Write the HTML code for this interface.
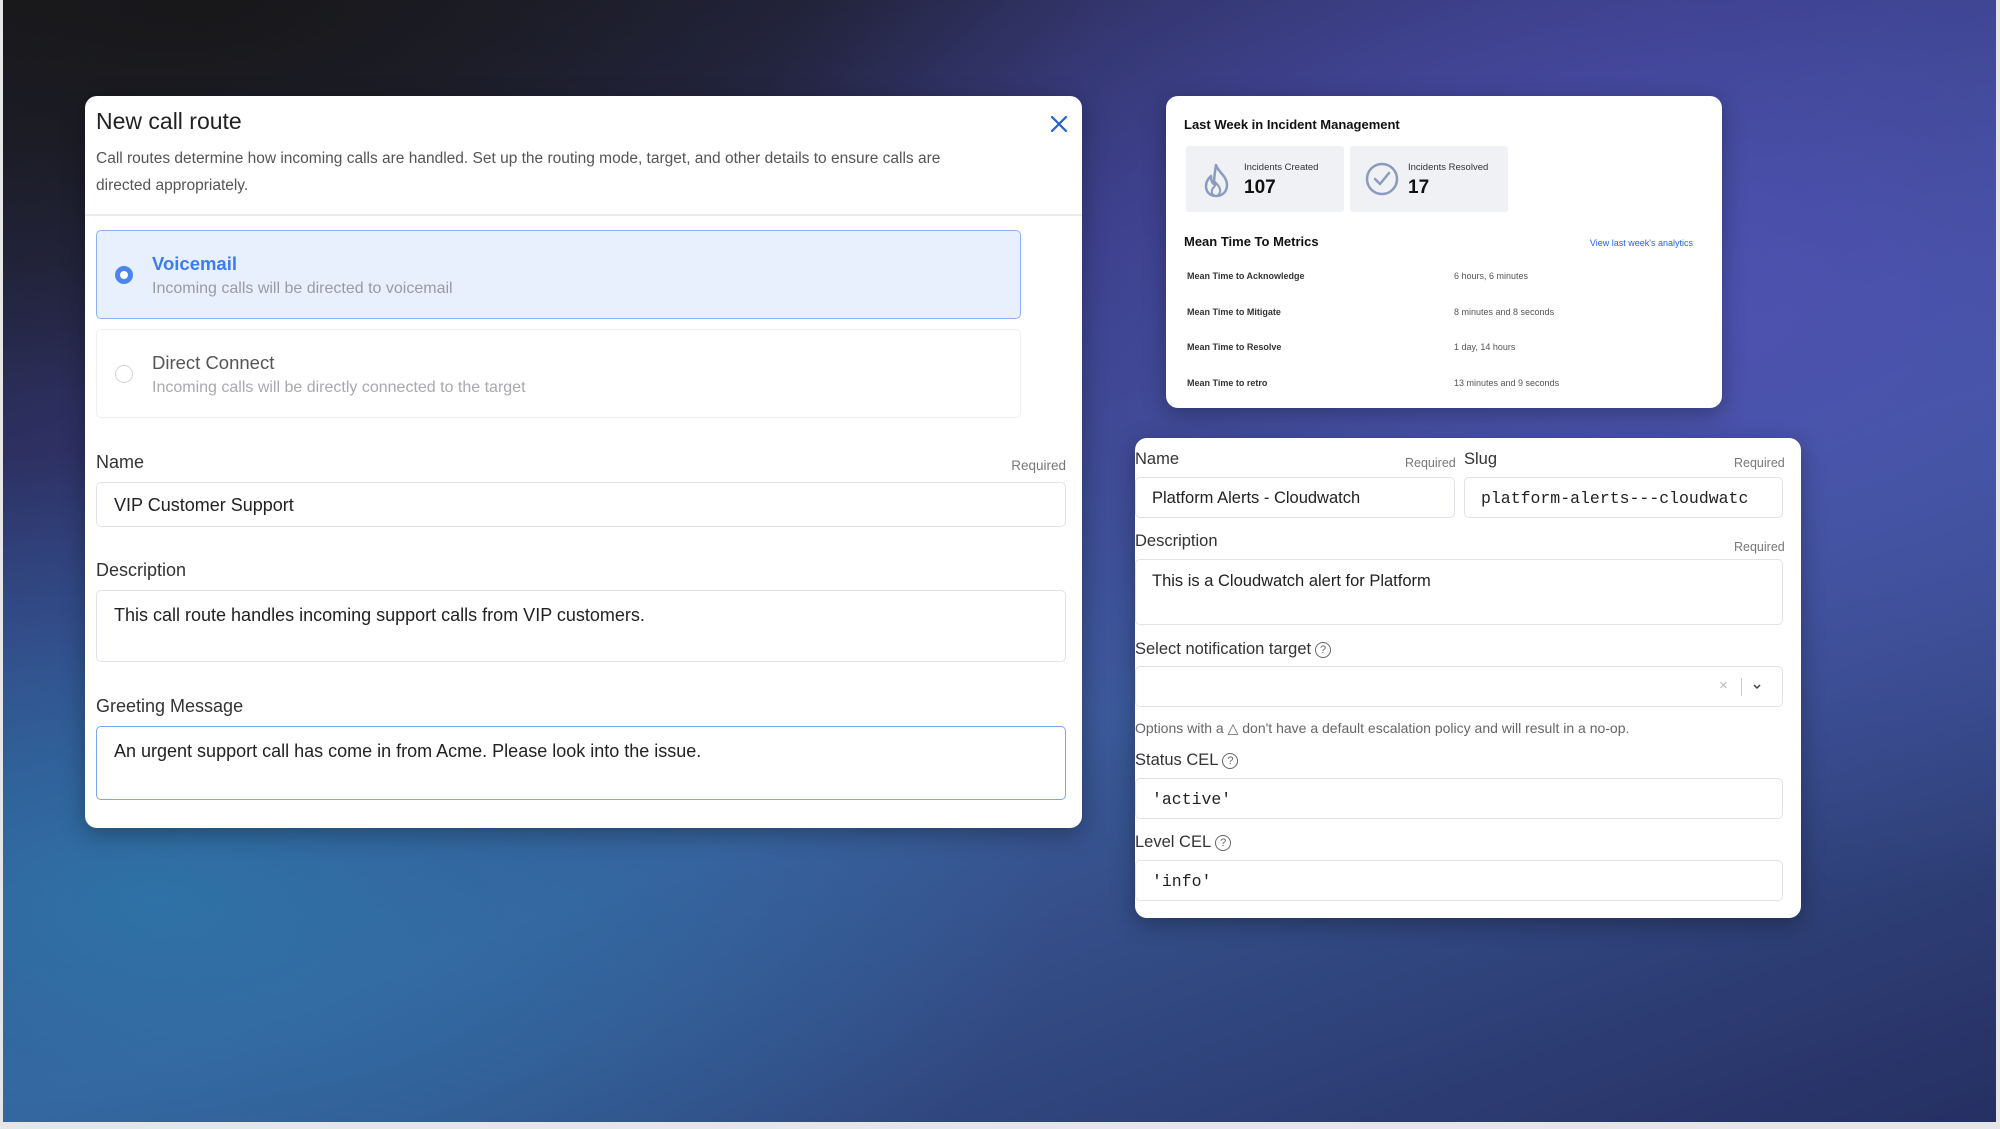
<!DOCTYPE html>
<html><head><meta charset="utf-8"><style>
*{box-sizing:border-box;margin:0;padding:0}
body{width:2000px;height:1129px;position:relative;overflow:hidden;background:#e6e6e6;font-family:"Liberation Sans",sans-serif}
#bg{position:absolute;left:3px;top:0;width:1993px;height:1122px;
background:
radial-gradient(ellipse 900px 450px at 150px 900px, rgba(45,120,170,0.85), rgba(45,120,170,0) 100%),
radial-gradient(ellipse 1000px 600px at 1700px 300px, rgba(80,82,180,0.9), rgba(80,82,180,0) 100%),
radial-gradient(ellipse 900px 400px at 200px 0px, rgba(24,24,26,1), rgba(24,24,26,0) 100%),
linear-gradient(160deg,#1c1c24 0%,#34387a 35%,#3a5a98 60%,#262f62 100%);}
.card{position:absolute;background:#fff;border-radius:12px;box-shadow:0 6px 24px rgba(0,0,0,0.3)}
.abs{position:absolute;white-space:nowrap}
.inp{position:absolute;border:1.5px solid #e2e3e8;border-radius:5px;background:#fff}
.lbl{font-size:18px;color:#333}
.req{font-size:13.5px;color:#777}
.mono{font-family:"Liberation Mono",monospace}
.q{display:inline-block;width:16px;height:16px;border:1.3px solid #666;border-radius:50%;font-size:11px;text-align:center;line-height:14px;color:#666;vertical-align:1px;margin-left:4px}
</style></head><body>
<div id="bg"></div>

<!-- left card -->
<div class="card" style="left:85px;top:96px;width:997px;height:732px">
  <div class="abs" style="left:11px;top:12px;font-size:23px;color:#222">New call route</div>
  <svg class="abs" style="left:964px;top:18px" width="20" height="20" viewBox="0 0 20 20"><path d="M3 3L17 17M17 3L3 17" stroke="#2563c9" stroke-width="2.2" stroke-linecap="round"/></svg>
  <div class="abs" style="left:11px;top:49px;font-size:15.5px;color:#555;line-height:27px;white-space:normal;width:860px">Call routes determine how incoming calls are handled. Set up the routing mode, target, and other details to ensure calls are directed appropriately.</div>
  <div class="abs" style="left:0;top:118px;width:997px;height:1.5px;background:#ebebeb"></div>
  <div class="abs" style="left:11px;top:134px;width:925px;height:89px;background:#e9f0fd;border:1.5px solid #8cb2f5;border-radius:5px">
    <div class="abs" style="left:18px;top:35px;width:18px;height:18px;border-radius:50%;border:5px solid #4b86f0;background:#fff"></div>
    <div class="abs" style="left:55px;top:22px;font-size:18.5px;color:#3b7ded;font-weight:bold">Voicemail</div>
    <div class="abs" style="left:55px;top:49px;font-size:16px;color:#9a9aa2">Incoming calls will be directed to voicemail</div>
  </div>
  <div class="abs" style="left:11px;top:233px;width:925px;height:89px;background:#fff;border:1.5px solid #efeff2;border-radius:5px">
    <div class="abs" style="left:18px;top:35px;width:18px;height:18px;border-radius:50%;border:1.5px solid #d4d4d8"></div>
    <div class="abs" style="left:55px;top:22px;font-size:18.5px;color:#555">Direct Connect</div>
    <div class="abs" style="left:55px;top:49px;font-size:16px;color:#a8a8b0">Incoming calls will be directly connected to the target</div>
  </div>
  <div class="abs lbl" style="left:11px;top:356px">Name</div>
  <div class="abs req" style="right:16px;top:362px">Required</div>
  <div class="inp" style="left:11px;top:386px;width:970px;height:45px"><div class="abs" style="left:17px;top:12px;font-size:18px;color:#222">VIP Customer Support</div></div>
  <div class="abs lbl" style="left:11px;top:464px">Description</div>
  <div class="inp" style="left:11px;top:494px;width:970px;height:72px"><div class="abs" style="left:17px;top:14px;font-size:18px;color:#222">This call route handles incoming support calls from VIP customers.</div></div>
  <div class="abs lbl" style="left:11px;top:600px">Greeting Message</div>
  <div class="inp" style="left:11px;top:630px;width:970px;height:74px;border-color:#7aa5ef"><div class="abs" style="left:17px;top:14px;font-size:18px;color:#222">An urgent support call has come in from Acme. Please look into the issue.</div></div>
</div>

<!-- top right card -->
<div class="card" style="left:1166px;top:96px;width:556px;height:312px">
  <div class="abs" style="left:18px;top:21px;font-size:13px;font-weight:bold;color:#111">Last Week in Incident Management</div>
  <div class="abs" style="left:20px;top:50px;width:158px;height:66px;background:#f0f1f4;border-radius:3px">
    <svg class="abs" style="left:16px;top:16px" width="30" height="36" viewBox="0 0 30 36"><path d="M14 3C16 10 25 14 25 23C25 30 20 34 14 34C8 34 4 30 4 24C4 19 7 16 9 14C9 18 10 21 12 22C12 15 13 9 14 3Z" fill="none" stroke="#8a9bbd" stroke-width="2.5" stroke-linejoin="round"/><path d="M14 34C11 34 9 31 10 28C11 25 14 24 14 21C17 24 19 27 18 30C17 33 16 34 14 34" fill="none" stroke="#8a9bbd" stroke-width="2"/></svg>
    <div class="abs" style="left:58px;top:16px;font-size:9.5px;color:#333">Incidents Created</div>
    <div class="abs" style="left:58px;top:31px;font-size:19px;font-weight:bold;color:#111">107</div>
  </div>
  <div class="abs" style="left:184px;top:50px;width:158px;height:66px;background:#f0f1f4;border-radius:3px">
    <svg class="abs" style="left:14px;top:15px" width="36" height="36" viewBox="0 0 36 36"><circle cx="18" cy="18" r="15" fill="none" stroke="#8a9bbd" stroke-width="2.5"/><path d="M11 18L16 23L25 12" fill="none" stroke="#8a9bbd" stroke-width="2.5" stroke-linecap="round" stroke-linejoin="round"/></svg>
    <div class="abs" style="left:58px;top:16px;font-size:9.5px;color:#333">Incidents Resolved</div>
    <div class="abs" style="left:58px;top:31px;font-size:19px;font-weight:bold;color:#111">17</div>
  </div>
  <div class="abs" style="left:18px;top:138px;font-size:13px;font-weight:bold;color:#111">Mean Time To Metrics</div>
  <div class="abs" style="right:29px;top:142px;font-size:9px;color:#2563eb">View last week's analytics</div>
  <div class="abs" style="left:21px;top:175px;font-size:9px;color:#333;font-weight:bold">Mean Time to Acknowledge</div>
  <div class="abs" style="left:288px;top:175px;font-size:9px;color:#555">6 hours, 6 minutes</div>
  <div class="abs" style="left:21px;top:211px;font-size:9px;color:#333;font-weight:bold">Mean Time to Mitigate</div>
  <div class="abs" style="left:288px;top:211px;font-size:9px;color:#555">8 minutes and 8 seconds</div>
  <div class="abs" style="left:21px;top:246px;font-size:9px;color:#333;font-weight:bold">Mean Time to Resolve</div>
  <div class="abs" style="left:288px;top:246px;font-size:9px;color:#555">1 day, 14 hours</div>
  <div class="abs" style="left:21px;top:282px;font-size:9px;color:#333;font-weight:bold">Mean Time to retro</div>
  <div class="abs" style="left:288px;top:282px;font-size:9px;color:#555">13 minutes and 9 seconds</div>
</div>

<!-- bottom right card -->
<div class="card" style="left:1135px;top:438px;width:666px;height:480px;overflow:hidden">
  <div class="abs" style="left:0;top:12px;font-size:16.5px;color:#333">Name</div>
  <div class="abs req" style="left:270px;top:18px;font-size:12.5px">Required</div>
  <div class="abs" style="left:329px;top:12px;font-size:16.5px;color:#333">Slug</div>
  <div class="abs req" style="left:599px;top:18px;font-size:12.5px">Required</div>
  <div class="inp" style="left:0;top:39px;width:320px;height:41px"><div class="abs" style="left:16px;top:11px;font-size:16.5px;color:#222">Platform Alerts - Cloudwatch</div></div>
  <div class="inp" style="left:329px;top:39px;width:319px;height:41px"><div class="abs mono" style="left:16px;top:11px;font-size:16.5px;color:#222">platform-alerts---cloudwatc</div></div>
  <div class="abs" style="left:0;top:94px;font-size:16.5px;color:#333">Description</div>
  <div class="abs req" style="left:599px;top:102px;font-size:12.5px">Required</div>
  <div class="inp" style="left:0;top:121px;width:648px;height:66px"><div class="abs" style="left:16px;top:12px;font-size:16.5px;color:#222">This is a Cloudwatch alert for Platform</div></div>
  <div class="abs" style="left:0;top:202px;font-size:16.5px;color:#333">Select notification target<span class="q">?</span></div>
  <div class="inp" style="left:0;top:228px;width:648px;height:41px">
    <div class="abs" style="left:583px;top:10px;font-size:15px;color:#bbb">×</div>
    <div class="abs" style="left:605px;top:11px;width:1px;height:18px;background:#ccc"></div>
    <svg class="abs" style="left:617px;top:17px" width="8" height="6" viewBox="0 0 8 6"><path d="M1 1L4 4L7 1" stroke="#444" stroke-width="1.5" fill="none"/></svg>
  </div>
  <div class="abs" style="left:0;top:282px;font-size:14px;color:#666">Options with a △ don't have a default escalation policy and will result in a no-op.</div>
  <div class="abs" style="left:0;top:313px;font-size:16.5px;color:#333">Status CEL<span class="q">?</span></div>
  <div class="inp" style="left:0;top:340px;width:648px;height:41px"><div class="abs mono" style="left:16px;top:11px;font-size:16.5px;color:#222">'active'</div></div>
  <div class="abs" style="left:0;top:395px;font-size:16.5px;color:#333">Level CEL<span class="q">?</span></div>
  <div class="inp" style="left:0;top:422px;width:648px;height:41px"><div class="abs mono" style="left:16px;top:11px;font-size:16.5px;color:#222">'info'</div></div>
</div>
</body></html>
